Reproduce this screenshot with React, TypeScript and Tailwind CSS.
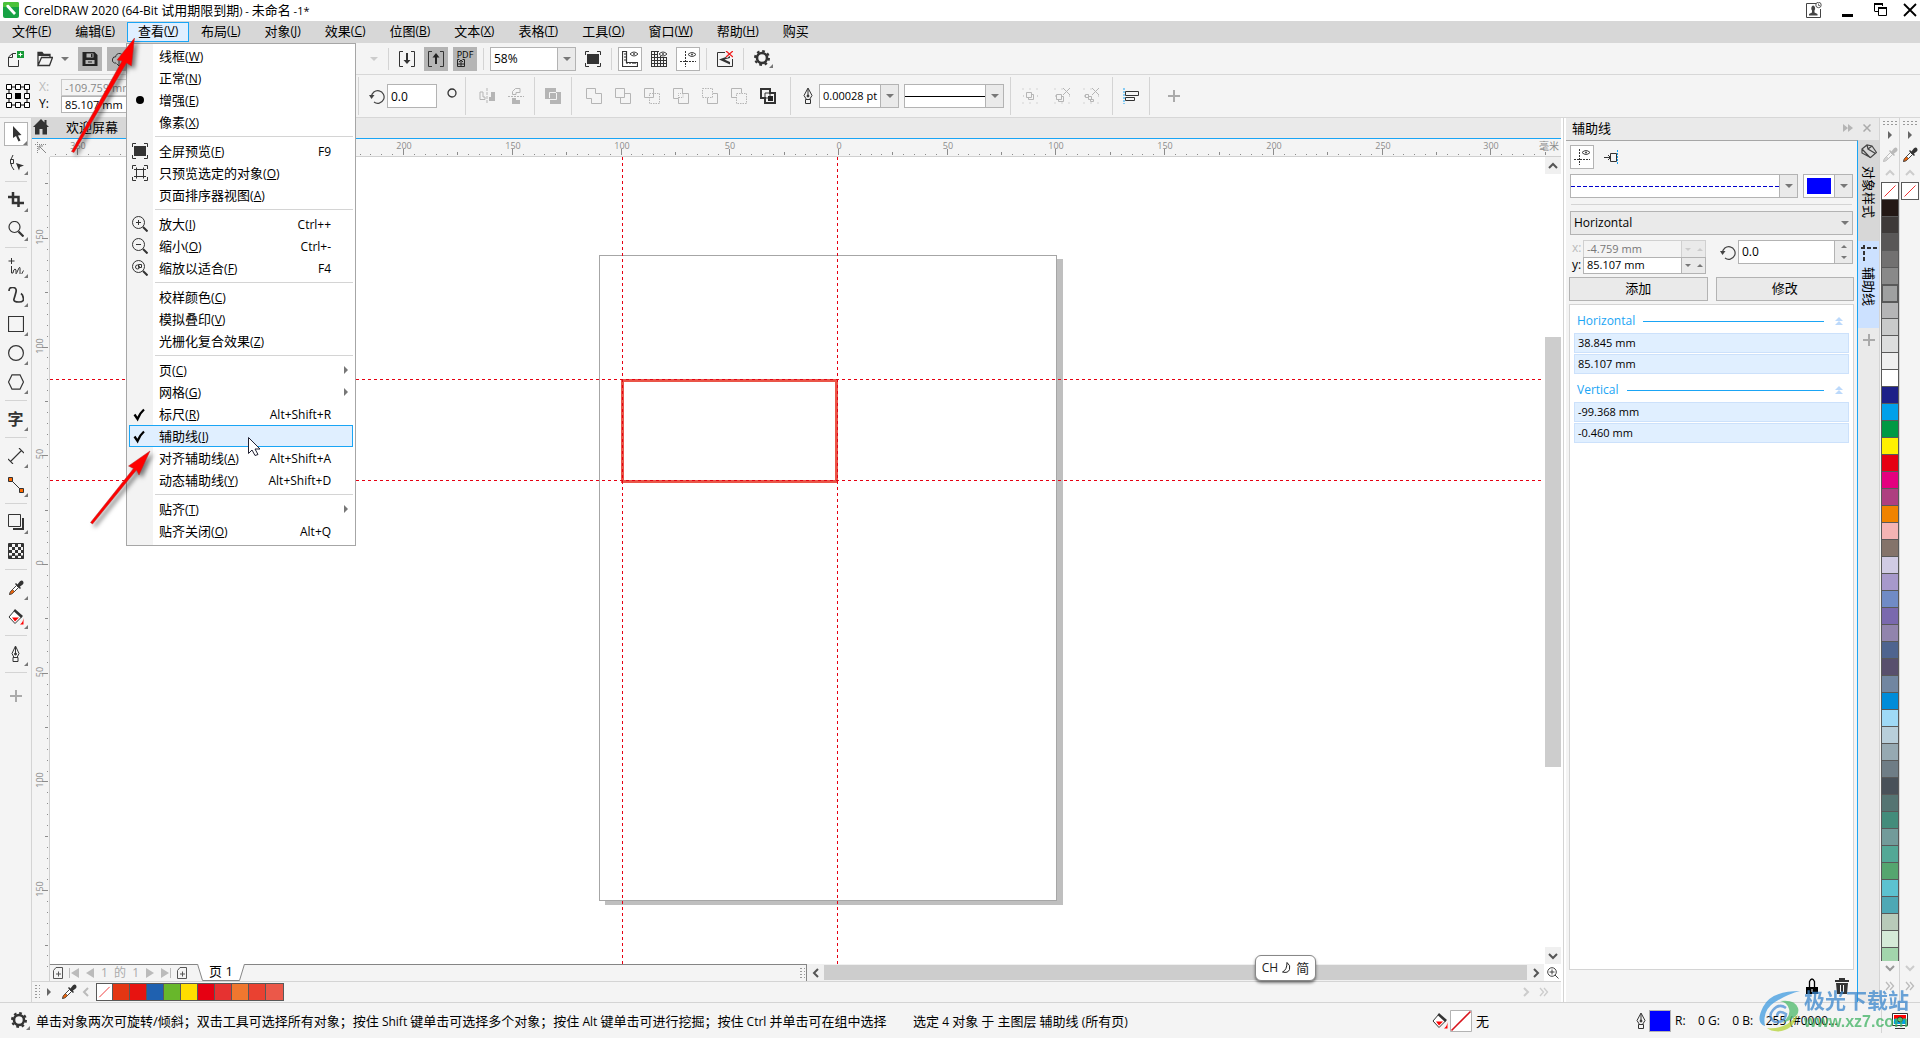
import React from "react";

type Kids = { children?: React.ReactNode; className?: string };

const guideIcon = (
  <>
    <path d="M5.5 0v16M0 10.5h16" stroke="#333" strokeDasharray="2 1" />
    <path d="M8 3.5q4-4 8 0q-4 4-8 0z" stroke="#444" />
    <circle cx="12" cy="3.5" r="1" fill="#444" />
  </>
);

// 16px icon canvas shared by the toolbars
function Icon({ children, className = "" }: Kids) {
  return (
    <svg viewBox="0 0 16 16" fill="none" className={`h-4 w-4 shrink-0 ${className}`} aria-hidden="true">
      {children}
    </svg>
  );
}

function Caret({ className = "text-[#777]" }: { className?: string }) {
  return (
    <svg viewBox="0 0 8 4" className={`h-1 w-2 shrink-0 ${className}`} aria-hidden="true">
      <path d="M0 0h8L4 4z" fill="currentColor" />
    </svg>
  );
}

function ArrowBox({ label }: { label: string }) {
  return (
    <button aria-label={label} className="flex w-[18px] shrink-0 items-center justify-center border-l border-[#b3b3b3] bg-[#eaeaea]">
      <Caret />
    </button>
  );
}

function Sep({ className = "h-[22px]" }: { className?: string }) {
  return <span className={`w-px shrink-0 bg-[#d4d4d4] ${className}`} />;
}

function Tool({ label, on, pressed, children }: Kids & { label: string; on?: boolean; pressed?: boolean }) {
  const look = pressed ? "bg-[#b5b5b5]" : on ? "border border-[#b3b3b3] bg-white" : "";
  return (
    <button aria-label={label} className={`flex h-6 w-6 shrink-0 items-center justify-center ${look}`}>
      <Icon>{children}</Icon>
    </button>
  );
}

function Gear() {
  return (
    <svg viewBox="0 0 20 20" className="h-5 w-5 shrink-0" aria-hidden="true">
      <circle cx="8" cy="9" r="5" fill="none" stroke="#333" strokeWidth="2.6" />
      <circle cx="8" cy="9" r="7" fill="none" stroke="#333" strokeWidth="2" strokeDasharray="2.7 2.8" />
      <path d="M19 15v4h-4z" fill="#777" />
    </svg>
  );
}

function Pen() {
  return (
    <svg viewBox="0 0 10 16" fill="none" stroke="#333" className="h-4 w-2.5 shrink-0" aria-hidden="true">
      <path d="M5 0L1 7.5L3.5 11.5h3L9 7.5zM5 1v7M2.5 11.5v4h5v-4z" />
      <circle cx="5" cy="8" r="1" fill="#333" />
    </svg>
  );
}

function Dropper({ muted }: { muted?: boolean }) {
  return (
    <Icon className={muted ? "opacity-30" : ""}>
      <path d="M1.500 14.500l1-3l6-6l2 2l-6 6z" stroke="#444" fill="#fff" />
      <path d="M1.500 14.500l1-3l2-2l2 2l-2 2z" fill={muted ? "#888" : "#e8640c"} stroke="#444" strokeWidth=".6" />
      <path d="M7.500 3.500l5 5" stroke="#333" strokeWidth="1.500" />
      <path d="M9 5l3-3.800q2-1.400 3 0t0 3L11.200 7.200z" fill="#333" />
    </Icon>
  );
}

function Bucket() {
  return (
    <Icon>
      <path d="M7 1L1 8l6 6.500L13.500 8z" stroke="#333" fill="#fff" />
      <path d="M5.500 2L7 0l8 7l-2 2z" fill="#333" />
      <path d="M4 8.500h7l-4 4z" fill="#f00" />
      <path d="M15.500 9v6.500h-3.500q3-2 3.500-6.500z" fill="#f00" />
    </Icon>
  );
}

function Chevron({ d, className = "" }: { d: string; className?: string }) {
  return (
    <svg viewBox="0 0 10 10" fill="none" stroke="currentColor" strokeWidth="2" className={`h-2.5 w-2.5 shrink-0 ${className}`} aria-hidden="true">
      <path d={d} />
    </svg>
  );
}

const UP = "M1 7l4-4l4 4";
const DOWN = "M1 3l4 4l4-4";
const LEFT = "M7 1L3 5l4 4";
const RIGHT = "M3 1l4 4l-4 4";
const MORE = "M1 1l3.500 4L1 9M5 1l3.500 4L5 9";

function More() {
  return (
    <svg viewBox="0 0 10 10" fill="none" stroke="currentColor" strokeWidth="1.300" className="h-2.5 w-2.5 shrink-0" aria-hidden="true">
      <path d={MORE} />
    </svg>
  );
}

function Dots({ className }: { className: string }) {
  return <span className={`shrink-0 bg-[radial-gradient(#999_0.8px,transparent_0.9px)] bg-[size:4px_3px] ${className}`} />;
}

function Key({ k }: { k: string }) {
  return (
    <span className="text-xs">
      (<u className="underline-offset-1">{k}</u>)
    </span>
  );
}

/* ---------- title + menu bar ---------- */

function TitleBar() {
  return (
    <header className="flex h-[21px] shrink-0 items-center bg-white pr-[3px] pb-px pl-[3px] text-black">
      <svg viewBox="0 0 16 16" className="h-4 w-4" aria-hidden="true">
        <rect width="16" height="16" rx="2" fill="#17a244" />
        <path d="M0 5V2q0-2 2-2h12q2 0 2 2v3z" fill="#4cc23a" />
        <path d="M3.500 3l2-.3l7.500 8.300l-2 2l-7.500-8z" fill="#fff" />
      </svg>
      <h1 className="ml-[5px] text-[13px] leading-5">
        <span className="text-xs">CorelDRAW 2020 (64-Bit </span>试用期限到期<span className="text-[11px]">) - </span>未命名<span className="text-[11px]"> -1*</span>
      </h1>
      <div className="ml-auto flex items-center">
        <button aria-label="登录" className="mr-5">
          <Icon>
            <path d="M10 1.500H.5v14h14V7" stroke="#444" />
            <path d="M7 3.500a2.500 3 0 0 1 1.500 5v2l3 1.500v1.500H3V12l3-1.500v-2A2.500 3 0 0 1 7 3.500z" fill="#444" />
            <circle cx="12.500" cy="3" r="2.700" fill="#fff" stroke="#555" />
            <path d="M12.500 1.500v2h1.500" stroke="#555" strokeWidth=".8" />
          </Icon>
        </button>
        <button aria-label="最小化" className="mr-5 flex h-4 w-[11px] items-end pb-px"><span className="h-[3px] w-full bg-black" /></button>
        <button aria-label="还原" className="mr-3.5">
          <Icon>
            <path d="M1.500 9V1.500h8V4M5.500 5.500h8v8h-8zM1.500 9.500H5" stroke="#000" />
            <path d="M1 2h9M5 6h9" stroke="#000" strokeWidth="2" />
          </Icon>
        </button>
        <button aria-label="关闭">
          <svg viewBox="0 0 14 14" className="h-3.5 w-3.5"><path d="M1 1l12 12M13 1L1 13" stroke="#000" strokeWidth="1.800" /></svg>
        </button>
      </div>
    </header>
  );
}

const tick = <path d="M2.500 8.500l3 4.500q2-5.500 6.500-9.500" stroke="#000" strokeWidth="2.300" />;
const lens = (inner: React.ReactNode) => (
  <>
    <circle cx="6.500" cy="6.500" r="6" stroke="#333" />
    <path d="M11 11l4.500 4.500" stroke="#333" strokeWidth="2" />
    {inner}
  </>
);
const frame = <path d="M.5 4V.5h3.500M12 .5h3.500V4M15.500 12v3.500H12M4 15.500H.5V12" stroke="#333" />;

type Item = { label: string; k: string; hot?: string; icon?: React.ReactNode; sub?: boolean; active?: boolean } | null;

const viewMenu: Item[] = [
  { label: "线框", k: "W" },
  { label: "正常", k: "N" },
  { label: "增强", k: "E", icon: <circle cx="8" cy="8" r="4" fill="#000" /> },
  { label: "像素", k: "X" },
  null,
  { label: "全屏预览", k: "F", hot: "F9", icon: <>{frame}<path d="M2 3h12v10H2z" fill="#333" /></> },
  { label: "只预览选定的对象", k: "O", icon: <>{frame}<path d="M4.500 2.500v11M11.500 2.500v11M2 4.500h12M2 11.500h12" stroke="#333" /></> },
  { label: "页面排序器视图", k: "A" },
  null,
  { label: "放大", k: "I", hot: "Ctrl++", icon: lens(<path d="M4 6.500h5M6.500 4v5" stroke="#333" />) },
  { label: "缩小", k: "O", hot: "Ctrl+-", icon: lens(<path d="M4 6.500h5" stroke="#333" />) },
  { label: "缩放以适合", k: "F", hot: "F4", icon: lens(<><circle cx="5.500" cy="7" r="2" stroke="#333" /><path d="M6.500 4.500h3v3h-3z" stroke="#333" /></>) },
  null,
  { label: "校样颜色", k: "C" },
  { label: "模拟叠印", k: "V" },
  { label: "光栅化复合效果", k: "Z" },
  null,
  { label: "页", k: "C", sub: true },
  { label: "网格", k: "G", sub: true },
  { label: "标尺", k: "R", hot: "Alt+Shift+R", icon: tick },
  { label: "辅助线", k: "I", icon: tick, active: true },
  { label: "对齐辅助线", k: "A", hot: "Alt+Shift+A" },
  { label: "动态辅助线", k: "Y", hot: "Alt+Shift+D" },
  null,
  { label: "贴齐", k: "T", sub: true },
  { label: "贴齐关闭", k: "O", hot: "Alt+Q" },
];

function ViewMenu() {
  return (
    <ul role="menu" className="absolute -left-px top-[21px] z-20 w-[230px] border border-[#a6a6a6] bg-[linear-gradient(to_right,#f3f3f3_26px,#fff_26px)] px-0.5 pt-px pb-[3px] text-left text-black">
      {viewMenu.map((m, i) =>
        m ? (
          <li key={i}>
            <button
              role="menuitem"
              className={`flex h-[22px] w-full items-center border pl-0.5 text-[13px] leading-5 ${m.active ? "border-[#1aa5f5] bg-[#e0efff]" : "border-transparent"}`}
            >
              <Icon>{m.icon}</Icon>
              <span className="ml-[11px] whitespace-nowrap">{m.label}<Key k={m.k} /></span>
              <span className="mr-[21px] ml-auto pt-0.5 text-xs">{m.hot}</span>
              {m.sub && <svg viewBox="0 0 4 8" className="mr-1 -ml-4 h-2 w-1"><path d="M0 0l4 4l-4 4z" fill="#777" /></svg>}
            </button>
          </li>
        ) : (
          <li key={i} role="separator" className="flex h-[7px] items-center pl-[26px]"><span className="h-px w-full bg-[#d4d4d4]" /></li>
        )
      )}
    </ul>
  );
}

const menus = [["文件", "F"], ["编辑", "E"], ["查看", "V"], ["布局", "L"], ["对象", "J"], ["效果", "C"], ["位图", "B"], ["文本", "X"], ["表格", "T"], ["工具", "O"], ["窗口", "W"], ["帮助", "H"], ["购买", ""]];

function MenuBar() {
  return (
    <nav className="flex h-[22px] shrink-0 items-center bg-[#d7d7d7] text-[13px] leading-[18px] text-black">
      {menus.map(([name, k]) => (
        <div key={name} className="relative">
          <button className={`flex h-5 items-start border px-[11px] leading-[17px] whitespace-nowrap ${k === "V" ? "w-[62px] justify-center border-[#1aa5f5] bg-[#e0efff]" : "border-transparent"}`}>
            {name}{k && <Key k={k} />}
          </button>
          {k === "V" && <ViewMenu />}
        </div>
      ))}
    </nav>
  );
}

/* ---------- toolbars ---------- */

function StandardBar() {
  return (
    <div className="flex h-8 shrink-0 items-center border-b border-[#d7d7d7] bg-[#f4f4f4]">
      <div className="flex w-[370px] shrink-0 items-center pl-1">
        <Tool label="新建">
          <path d="M8 2.500H4.500L.5 6v9.500h10V9" stroke="#333" />
          <path d="M4.500 3v3.500H1" stroke="#333" />
          <path d="M9 0h7v7H9z" fill="#159a36" />
          <path d="M12.500 1.500v4M10.500 3.500h4" stroke="#fff" />
        </Tool>
        <span className="w-[5px]" />
        <Tool label="打开">
          <path d="M1 14.500V1.500h4l1.500 2h6.500V6.500H4.500L1 14.500h11.500l3-8H13" stroke="#333" strokeWidth="1.300" />
          <path d="M1 3V1.500h4l1.500 2h6.500v1.500H1z" fill="#333" />
        </Tool>
        <span className="ml-1"><Caret /></span>
        <span className="w-[9px]" />
        <Tool label="保存" pressed>
          <path d="M.5 1h12l3 3v11H.5z" fill="#222" />
          <path d="M4.500 2.500h7v4h-7zM3.500 9h9v4h-9z" fill="#b5b5b5" />
          <path d="M9 3h1.500v3H9zM6 10.500h4v1H6z" fill="#222" />
        </Tool>
        <span className="w-[5px]" />
        <Tool label="云" pressed>
          <path d="M5 12H3.500q-3-1-2-4t3-2q1-4 4.500-3.500t4 4q3 .5 2.500 3T12 12M8 7v8M5.500 12.500L8 15l2.500-2.500" stroke="#333" />
        </Tool>
      </div>
      <Caret className="text-[#ccc]" />
      <Sep className="ml-2.5 h-[22px]" />
      <span className="w-1.5" />
      <Tool label="导入"><path d="M4 .5H.5v15H4M12 .5h3.500v15H12" stroke="#333" /><path d="M8 2v9" stroke="#333" strokeWidth="2" /><path d="M4.500 9h7L8 13z" fill="#333" /></Tool>
      <span className="w-[5px]" />
      <Tool label="导出" pressed><path d="M4 .5H.5v15H4M12 .5h3.500v15H12" stroke="#333" /><path d="M8 13V5" stroke="#222" strokeWidth="2" /><path d="M4.500 6.500h7L8 2z" fill="#222" /></Tool>
      <span className="w-[5px]" />
      <button aria-label="发布为 PDF" className="flex h-6 w-6 flex-col items-center justify-center bg-[#b5b5b5] text-[9px] leading-[9px] text-black">
        PDF
        <svg viewBox="0 0 8 8" className="mr-2 h-2 w-2"><path d="M2.500.5h-2v7h7v-7h-2M4 7V1M2 3l2-2l2 2M1 5h6" fill="none" stroke="#222" /></svg>
      </button>
      <Sep className="ml-1.5 h-[22px]" />
      <div className="ml-1.5 flex h-6 w-[86px] border border-[#b3b3b3] bg-white">
        <input aria-label="缩放级别" defaultValue="58%" className="min-w-0 flex-1 bg-white pl-[3px] text-xs outline-none" />
        <ArrowBox label="缩放列表" />
      </div>
      <span className="w-[5px]" />
      <Tool label="全屏预览">{frame}<path d="M2 3h12v10H2z" fill="#333" /></Tool>
      <Sep className="ml-1.5 h-[22px]" />
      <span className="w-1.5" />
      <Tool label="显示标尺" on>
        <path d="M.5.5h4v11h11v4H.5zM2 3h2M2 6h2M2 9h2M5 13v-1M8 13v-1M11 13v-1M13 13v-1" stroke="#333" strokeWidth="1.200" />
        <path d="M8 3q4-4 8 0q-4 4-8 0z" stroke="#444" />
        <circle cx="12" cy="3" r="1" fill="#444" />
      </Tool>
      <span className="w-[5px]" />
      <Tool label="显示网格">
        <path d="M.5 0v16M3.500 0v16M6.500 0v16M9.500 5v11M12.500 6v10M15.500 6v10M0 .5h8M0 3.500h7M0 6.500h16M0 9.500h16M0 12.500h16M0 15.500h16" stroke="#333" />
        <path d="M8 3q4-4 8 0q-4 4-8 0z" stroke="#444" />
        <circle cx="12" cy="3" r="1" fill="#444" />
      </Tool>
      <span className="w-[5px]" />
      <Tool label="显示辅助线" on>{guideIcon}</Tool>
      <Sep className="ml-1.5 h-[22px]" />
      <span className="w-1.5" />
      <Tool label="贴齐关闭">
        <path d="M8 1.500H.5v14h15V8" stroke="#333" />
        <path d="M2 8.500L13 4.500v2.500L7.500 8.500L13 11v2.500z" fill="#333" />
        <path d="M9 0l7 6M16 0L9 6" stroke="#f4f4f4" strokeWidth="3" />
        <path d="M9 0l7 6M16 0L9 6" stroke="#f01818" strokeWidth="1.300" />
      </Tool>
      <Sep className="ml-1.5 h-[22px]" />
      <button aria-label="选项" className="ml-2.5"><Gear /></button>
    </div>
  );
}

function Rotate() {
  return (
    <Icon>
      <path d="M2.500 9A6.300 6.300 0 1 1 5 14" stroke="#444" strokeWidth="1.200" />
      <path d="M0 7h5.500L2.500 11z" fill="#444" />
    </Icon>
  );
}

const shaping: [string, React.ReactNode][] = [
  ["焊接", <path d="M.5.5h9v5h6v10h-10v-5h-5z" stroke="#b5b5b5" />],
  ["修剪", <path d="M.5.5h9v9h-9zM5.500 9.500v6h10v-10h-6" stroke="#b5b5b5" />],
  ["相交", <><path d="M.5.5h9v9h-9z" stroke="#b5b5b5" /><path d="M5.500 5.500h10v10h-10z" stroke="#b5b5b5" strokeDasharray="1.500 1" /></>],
  ["简化", <><path d="M.5.5h9v5h6v10h-10v-5h-5z" stroke="#b5b5b5" /><path d="M5.500 10V5.500H10M6 9.500h4V6" stroke="#b5b5b5" strokeDasharray="1 1" /></>],
  ["移除后面对象", <><path d="M.5.5h10v9h-10z" stroke="#b5b5b5" strokeDasharray="1.500 1" /><path d="M11 5.500h4.500v10h-10V10" stroke="#b5b5b5" /></>],
  ["移除前面对象", <><path d="M5 9.500H.5v-9h10V5" stroke="#b5b5b5" /><path d="M5.500 5.500h10v10h-10z" stroke="#b5b5b5" strokeDasharray="1.500 1" /></>],
];

function PropertyBar() {
  const dotted = <path d="M.5 1h16M.5 15h16M1 8h1M15 8h1" stroke="#b5b5b5" strokeDasharray="1 6" />;
  return (
    <div className="flex h-[43px] shrink-0 items-center border-b border-[#d7d7d7] bg-[#f4f4f4]">
      <div className="flex w-[358px] shrink-0 items-center pl-1.5">
        <svg viewBox="0 0 24 24" fill="none" stroke="#000" className="h-6 w-6 shrink-0" aria-hidden="true">
          <path d="M3 3h18v18H3z" />
          <path d="M.5.5h5v5h-5zM9.500.5h5v5h-5zM18.500.5h5v5h-5zM.5 9.500h5v5h-5zM18.500 9.500h5v5h-5zM.5 18.500h5v5h-5zM9.500 18.500h5v5h-5zM18.500 18.500h5v5h-5z" fill="#fff" />
          <path d="M9 9h6v6H9z" fill="#000" stroke="none" />
        </svg>
        <div className="ml-[9px] grid grid-cols-[22px_110px] text-xs">
          <label htmlFor="px" className="leading-4 text-[#bbb]">X:</label>
          <input id="px" disabled defaultValue="-109.759 mm" className="h-[17px] border border-[#c9c9c9] bg-[#f4f4f4] pl-[3px] text-[11px] text-[#888]" />
          <label htmlFor="py" className="leading-4">Y:</label>
          <input id="py" defaultValue="85.107 mm" className="h-[17px] border border-[#b3b3b3] bg-white pl-[3px] text-[11px]" />
        </div>
      </div>
      <Sep className="h-[38px]" />
      <div className="ml-2.5 flex items-center"><Rotate /></div>
      <input aria-label="旋转角度" defaultValue="0.0" className="ml-0.5 h-6 w-[50px] border border-[#b3b3b3] bg-white pl-[3px] text-xs" />
      <svg viewBox="0 0 10 10" className="mb-1.5 ml-2.5 h-2.5 w-2.5"><circle cx="5" cy="5" r="4" fill="none" stroke="#333" strokeWidth="1.300" /></svg>
      <Sep className="ml-2 h-[38px]" />
      <span className="w-[9px]" />
      <Tool label="水平镜像"><path d="M1 4v7.500h5V9H4V4z" stroke="#b5b5b5" /><path d="M8 0v16" stroke="#b5b5b5" strokeDasharray="3 1" /><path d="M10 13V9h2V4h4v9z" fill="#b5b5b5" /></Tool>
      <span className="w-[5px]" />
      <Tool label="垂直镜像"><path d="M4.500 6.500v-3l3-3H12v4H8v2z" stroke="#b5b5b5" /><path d="M0 8.500h16" stroke="#b5b5b5" strokeDasharray="2 1" /><path d="M4 10h4v2h4v4H4z" fill="#b5b5b5" /></Tool>
      <Sep className="ml-1.5 h-[38px]" />
      <span className="w-1.5" />
      <Tool label="合并"><path d="M0 0h11v4h5v12H5v-5H0z" fill="#b5b5b5" /><path d="M4.500 10V4.500H11M11.500 5v6.500H5" stroke="#f4f4f4" /></Tool>
      <Sep className="ml-1.5 h-[38px]" />
      <div className="mx-2.5 flex items-center gap-[5px]">
        {shaping.map(([name, art]) => <Tool key={name} label={name}>{art}</Tool>)}
        <Tool label="边界"><path d="M1 1h9v4h5v10H5v-5H1z" stroke="#333" strokeWidth="2" /><path d="M5 5h5v5H5z" stroke="#333" /><path d="M8 8h5v5H8z" fill="#222" /></Tool>
      </div>
      <Sep className="h-[38px]" />
      <span className="ml-3 flex"><Pen /></span>
      <div className="ml-1.5 flex h-6 w-20 border border-[#b3b3b3] bg-white">
        <input aria-label="轮廓宽度" defaultValue="0.00028 pt" className="min-w-0 flex-1 bg-white pl-[3px] text-[11px] outline-none" />
        <ArrowBox label="宽度列表" />
      </div>
      <div className="ml-[5px] flex h-6 w-[100px] border border-[#b3b3b3] bg-white">
        <span className="flex flex-1 items-center"><span className="h-px w-full bg-black" /></span>
        <ArrowBox label="线条样式" />
      </div>
      <Sep className="ml-1.5 h-[38px]" />
      <span className="w-[7px]" />
      <Tool label="组合">{dotted}<path d="M4.500 4.500h5v5h-5zM6.500 9.500v2h5v-5h-2" stroke="#b5b5b5" /></Tool>
      <span className="w-2" />
      <Tool label="取消组合"><path d="M.5 1h8M.5 15h16M1 8h1M15 8h1" stroke="#b5b5b5" strokeDasharray="1 6" /><path d="M2.500 6.500h5v5h-5zM4.500 11.500v2h5v-5h-2M9 0l7 7M16 0L9 7" stroke="#b5b5b5" /></Tool>
      <span className="w-[5px]" />
      <Tool label="取消全部组合"><path d="M.5 1h8M.5 15h16M1 8h1M15 8h1" stroke="#b5b5b5" strokeDasharray="1 6" /><path d="M2.500 6.500h3v3h-3zM5.500 8.500h3v3h-3zM7.500 11.500h3v2h-3zM9 0l7 7M16 0L9 7" stroke="#b5b5b5" /></Tool>
      <Sep className="ml-[9px] h-[38px]" />
      <span className="w-1.5" />
      <Tool label="对齐与分布"><path d="M1 0v16" stroke="#1aa5f5" strokeDasharray="2 1" /><path d="M2.500 3.500h13v4h-13zM2.500 9.500h9v3h-9z" stroke="#333" /></Tool>
      <Sep className="ml-1.5 h-[38px]" />
      <button aria-label="自定义" className="ml-4"><Icon><path d="M2 8h12M8 2v12" stroke="#aaa" strokeWidth="2" /></Icon></button>
    </div>
  );
}

/* ---------- toolbox ---------- */

const tools: ([string, React.ReactNode] | null)[] = [
  ["选择", <path d="M5 0v12l3-2l2.500 5.500l2-1L10 9.500l3.500-.5z" fill="#333" />],
  ["形状", <><path d="M5 0Q0 8 6 15" stroke="#333" /><path d="M2.500 4.500h3v4h-3z" stroke="#333" fill="#f4f4f4" /><path d="M8 8l8 2.500l-4 1.500l-1 3.500z" fill="#333" /></>],
  null,
  ["裁剪", <path d="M0 5h10.500v6M5 0v11h11M10.500 15v-4" stroke="#333" strokeWidth="2.500" />],
  ["缩放", <><circle cx="6.500" cy="6" r="5.500" stroke="#333" strokeWidth="1.200" /><path d="M10.500 10.500l5 5" stroke="#333" strokeWidth="2.200" /></>],
  null,
  ["手绘", <><path d="M3.500 0v6M.5 3h6" stroke="#333" /><path d="M3.500 8v7H5q.5-4 2-4t1 3.500t2-2.500t2 1.500t3.500-1" stroke="#333" /></>],
  ["艺术笔", <path d="M1 4q0-4 4-3.500t3 4.500t-2 7t5 3t4-5q0-2-2-3.500" stroke="#333" strokeWidth="1.700" />],
  ["矩形", <path d="M.5.5h15v15H.5z" stroke="#333" strokeWidth="1.200" />],
  ["椭圆", <circle cx="8" cy="8" r="7.400" stroke="#333" strokeWidth="1.200" />],
  ["多边形", <path d="M4 .8h8L15.500 8L12 15.200H4L.5 8z" stroke="#333" strokeWidth="1.200" />],
  null,
  ["文本", null],
  null,
  ["尺度", <path d="M2.500 13.500l11-11M0 11l5 5M11 0l5 5" stroke="#333" strokeWidth="1.100" />],
  ["连接器", <><path d="M3 3l10 10" stroke="#333" /><path d="M.5.5h4v4h-4zM11.500 11.500h4v4h-4z" stroke="#333" fill="#ff6a00" /></>],
  null,
  ["阴影", <><path d="M.5.5h12v12H.5z" stroke="#333" /><path d="M5 15h10V4" stroke="#333" strokeWidth="2" /></>],
  ["透明度", <><path d="M.5.5h15v15H.5z" stroke="#333" /><path d="M1 2.500h15M1 8.500h15M1 14h15" stroke="#333" strokeWidth="3" strokeDasharray="3 3" /><path d="M4 5.500h12M4 11.500h12" stroke="#333" strokeWidth="3" strokeDasharray="3 3" /></>],
  null,
  ["颜色滴管", <Dropper />],
  ["交互式填充", <Bucket />],
  null,
  ["轮廓笔", <g stroke="#333"><path d="M7.500 0L4 7.500L6 11.500h3L11 7.500zM7.500 1v7M5 11.500v4h5v-4z" /><circle cx="7.500" cy="8" r="1" fill="#333" /></g>],
  null,
];

function Toolbox() {
  return (
    <aside className="flex w-8 shrink-0 flex-col items-center border-r border-[#d4d4d4] bg-[#f4f4f4] pt-px">
      {tools.map((t, i) =>
        t ? (
          <button key={i} aria-label={t[0]} className="flex h-[29px] w-full items-center justify-center">
            <span className={`relative flex h-6 w-6 items-center justify-center ${i === 0 ? "border border-[#b3b3b3] bg-white" : ""}`}>
              {t[1] ? <Icon>{t[1]}</Icon> : <span className="text-base leading-4 font-bold text-[#333]">字</span>}
              {t[0] !== "透明度" && (
                <svg viewBox="0 0 4 4" className="absolute right-0 bottom-0 h-1 w-1"><path d="M4 0v4H0z" fill="#777" /></svg>
              )}
            </span>
          </button>
        ) : (
          <span key={i} className="flex h-2 w-[22px] items-center"><span className="h-px w-full bg-[#d4d4d4]" /></span>
        )
      )}
      <button aria-label="添加工具" className="mt-3"><Icon><path d="M2 8h12M8 2v12" stroke="#aaa" strokeWidth="2" /></Icon></button>
    </aside>
  );
}

/* ---------- document window ---------- */

const STEP = 10.874;
const hSteps = Array.from({ length: 138 }, (_, i) => i - 72);
const vSteps = Array.from({ length: 74 }, (_, i) => i - 36);

function HRuler() {
  return (
    <svg className="h-[18px] min-w-0 flex-1 border-b border-[#d0d0d0] text-[9px]" fill="#8c8c8c" aria-hidden="true">
      {hSteps.map((n) => {
        const x = Math.round(788 + n * STEP);
        const h = n % 10 === 0 ? 6 : n % 5 === 0 ? 3 : 1;
        return (
          <g key={n}>
            <rect x={x} y={16 - h} width="1" height={h} />
            {n % 10 === 0 && <text x={x + 1} y="10" textAnchor="middle">{Math.abs(n * 5)}</text>}
          </g>
        );
      })}
      <text x="1489" y="11" className="text-[10px]">毫米</text>
    </svg>
  );
}

function VRuler() {
  return (
    <svg className="w-[18px] shrink-0 border-r border-[#d0d0d0] text-[9px]" fill="#8c8c8c" aria-hidden="true">
      {vSteps.map((n) => {
        const y = Math.round(407 + n * STEP);
        const w = n % 10 === 0 ? 6 : n % 5 === 0 ? 3 : 1;
        return (
          <g key={n}>
            <rect x={16 - w} y={y} width={w} height="1" />
            {n % 10 === 0 && <text transform={`translate(11 ${y - 1}) rotate(-90)`} textAnchor="middle">{Math.abs(n * 5)}</text>}
          </g>
        );
      })}
    </svg>
  );
}

function Drawing() {
  return (
    <svg className="min-w-0 flex-1 bg-white" fill="none" shapeRendering="crispEdges" aria-label="绘图页面">
      <path d="M1007 102h6v646H555v-5h452z" fill="#bfbfbf" />
      <rect x="549.500" y="98.500" width="457" height="645" fill="#fff" stroke="#a6a6a6" />
      <rect x="572.500" y="223.500" width="214" height="101" stroke="#ea5548" strokeWidth="3" />
      <g stroke="#e60012" strokeDasharray="3 3">
        <path d="M0 222.500h1491M0 323.500h1491" />
        <path d="M572.500 0v807M787.500 0v807" />
      </g>
    </svg>
  );
}

function PageBar() {
  const add = (
    <svg viewBox="0 0 10 12" fill="none" stroke="#555" className="h-3 w-2.5"><path d="M3 .5h6.500v11H.5v-8zM3 7h5M5.500 4.500v5" /></svg>
  );
  return (
    <div className="flex h-[17px] shrink-0 bg-[#f4f4f4]">
      <div className="flex min-w-0 flex-[0_1_757px] items-center border-t border-r border-[#858585] text-xs text-[#aaa]">
        <button aria-label="在前添加页" className="ml-[3px]">{add}</button>
        <button aria-label="第一页" className="ml-1.5"><svg viewBox="0 0 10 10" className="h-2.5 w-2.5"><path d="M0 0h1v10H0zM10 0v10L2 5z" fill="#bbb" /></svg></button>
        <button aria-label="上一页" className="ml-[7px]"><svg viewBox="0 0 8 10" className="h-2.5 w-2"><path d="M8 0v10L0 5z" fill="#bbb" /></svg></button>
        <span className="ml-[7px] w-10 whitespace-pre">1  的  1</span>
        <button aria-label="下一页" className="ml-[5px]"><svg viewBox="0 0 8 10" className="h-2.5 w-2"><path d="M0 0v10L8 5z" fill="#bbb" /></svg></button>
        <button aria-label="最后一页" className="ml-[7px]"><svg viewBox="0 0 10 10" className="h-2.5 w-2.5"><path d="M9 0h1v10H9zM0 0v10l8-5z" fill="#bbb" /></svg></button>
        <button aria-label="在后添加页" className="ml-1.5">{add}</button>
        <button className="relative ml-2.5 flex h-4 w-12 justify-center self-start text-black">
          <svg viewBox="0 0 48 17" className="absolute -top-px left-0 h-[17px] w-12"><path d="M0 0l6 16.500h36L48 0z" fill="#fff" /><path d="M.5 0l5 16.500h37l5-16.500" fill="none" stroke="#858585" /></svg>
          <span className="relative text-[13px] leading-[13px]">页 1</span>
        </button>
        <Dots className="mr-px ml-auto h-3 w-1.5" />
      </div>
      <div className="flex min-w-0 flex-1 bg-[#f0f0f0]">
        <button aria-label="向左滚动" className="flex w-[17px] items-center justify-center text-[#555]"><Chevron d={LEFT} /></button>
        <span className="mt-px mb-px flex-1 bg-[#cdcdcd]" />
        <button aria-label="向右滚动" className="flex w-[17px] items-center justify-center text-[#555]"><Chevron d={RIGHT} /></button>
        <button aria-label="导航器" className="flex w-[17px] items-center justify-center bg-white">
          <svg viewBox="0 0 12 12" fill="none" stroke="#444" className="h-3 w-3"><circle cx="5" cy="5" r="4.300" /><path d="M8 8l3.500 3.500M5 2.500v5M2.500 5h5" /></svg>
        </button>
      </div>
    </div>
  );
}

function NoFill({ className = "" }: { className?: string }) {
  return (
    <svg viewBox="0 0 16 16" className={`shrink-0 bg-white ${className}`}><path d="M2.500 13.500l11-11" stroke="#e33" /></svg>
  );
}

const docColors = ["bg-[#e43613]", "bg-[#e71310]", "bg-[#1f61b0]", "bg-[#68b72b]", "bg-[#ffde00]", "bg-[#e60012]", "bg-[#e63231]", "bg-[#f0772f]", "bg-[#ea4131]", "bg-[#eb5849]"];

function DocPalette() {
  return (
    <div className="flex h-[21px] shrink-0 items-center border-t border-[#d4d4d4] bg-[#f4f4f4] pl-0.5">
      <Dots className="h-4 w-1.5" />
      <svg viewBox="0 0 4 8" className="ml-[7px] h-2 w-1"><path d="M0 0l4 4l-4 4z" fill="#666" /></svg>
      <button aria-label="滴管" className="ml-2.5"><Dropper /></button>
      <Chevron d={LEFT} className="ml-1 text-[#bbb]" />
      <div className="ml-[5px] flex h-[18px] divide-x divide-[#595959] border border-[#595959]">
        <NoFill className="h-4 w-4" />
        {docColors.map((c) => <button key={c} aria-label="颜色" className={`w-[17px] ${c}`} />)}
      </div>
      <span className="ml-auto mr-3 flex gap-2 text-[#ccc]">
        <Chevron d={RIGHT} />
        <More />
      </span>
    </div>
  );
}

function DocWindow() {
  return (
    <main className="flex min-w-0 flex-1 flex-col bg-[#f4f4f4]">
      <div className="flex h-[21px] shrink-0 border-b border-[#1aa5f5] bg-[#eaeaea]">
        <button className="flex w-[130px] items-center bg-[#d7d7d7] pb-0.5 pl-px text-[13px] leading-[18px]">
          <Icon><path d="M8 0L0 8h2v7.500h4.500V10h3v5.500H14V8h2l-2.500-2.500V1h-2v2.500z" fill="#333" /></Icon>
          <span className="ml-[17px]">欢迎屏幕</span>
        </button>
      </div>
      <div className="flex shrink-0">
        <span className="flex h-[18px] w-[18px] shrink-0 items-center justify-center">
          <svg viewBox="0 0 12 12" fill="none" stroke="#888" className="h-3 w-3"><path d="M2.500 0v12M0 2.500h12" strokeDasharray="1 1" /><path d="M4 4l7 7M4 8V4h4" /></svg>
        </span>
        <HRuler />
      </div>
      <div className="flex min-h-0 flex-1">
        <VRuler />
        <div className="flex min-w-0 flex-1 flex-col">
          <div className="flex min-h-0 flex-1">
            <Drawing />
            <div className="flex w-4 shrink-0 flex-col bg-white">
              <button aria-label="向上滚动" className="flex h-[17px] items-center justify-center bg-[#f0f0f0] text-[#555]"><Chevron d={UP} /></button>
              <span className="flex-[163]" />
              <span className="flex-[430] bg-[#cdcdcd]" />
              <span className="flex-[180]" />
              <button aria-label="向下滚动" className="flex h-[17px] items-center justify-center bg-[#f0f0f0] text-[#555]"><Chevron d={DOWN} /></button>
            </div>
          </div>
          <PageBar />
        </div>
      </div>
      <DocPalette />
    </main>
  );
}

/* ---------- guidelines docker ---------- */

function Spin({ dim }: { dim?: boolean }) {
  const c = dim ? "text-[#ccc]" : "text-[#777]";
  return (
    <span className={`flex w-6 shrink-0 items-center justify-center gap-1.5 border-l bg-[#eaeaea] ${dim ? "border-[#d0d0d0]" : "border-[#b3b3b3]"}`}>
      <svg viewBox="0 0 6 3" className={`h-[3px] w-1.5 ${c}`}><path d="M0 0h6L3 3z" fill="currentColor" /></svg>
      <svg viewBox="0 0 6 3" className={`h-[3px] w-1.5 ${c}`}><path d="M0 3h6L3 0z" fill="currentColor" /></svg>
    </span>
  );
}

function GuideGroup({ name, values }: { name: string; values: string[] }) {
  return (
    <section>
      <h3 className="flex h-7 items-center pt-1 pl-[3px] text-xs text-[#1aa5f5]">
        {name}
        <span className="mr-[27px] ml-2 h-px flex-1 bg-[#1aa5f5]" />
        <svg viewBox="0 0 8 8" className="mr-1.5 -ml-4 h-2 w-2"><path d="M0 4l4-4l4 4zM0 8l4-4l4 4z" fill="#bcd9fb" /></svg>
      </h3>
      <ul className="flex flex-col gap-px">
        {values.map((v) => <li key={v} className="h-5 border border-[#cce1fb] bg-[#e0efff] pl-[3px] text-[11px] leading-[18px]">{v}</li>)}
      </ul>
    </section>
  );
}

function Docker() {
  return (
    <section className="flex w-[313px] shrink-0 flex-col bg-[#f4f4f4]">
      <header className="flex h-[22px] shrink-0 items-center bg-[#eaeaea] pr-1 pb-0.5 pl-1.5 text-[#aaa]">
        <h2 className="text-[13px] leading-5 text-black">辅助线</h2>
        <button aria-label="折叠" className="ml-auto"><svg viewBox="0 0 10 8" className="h-2 w-2.5"><path d="M0 0l5 4l-5 4zM5 0l5 4l-5 4z" fill="#b5b5b5" /></svg></button>
        <button aria-label="关闭泊坞窗" className="ml-1.5"><Icon className="p-1"><path d="M1 1l14 14M15 1L1 15" stroke="#aaa" strokeWidth="3" /></Icon></button>
      </header>
      <div className="flex min-h-0 flex-1">
        <div className="flex min-w-0 flex-1 flex-col border-t border-r border-t-[#a6a6a6] border-r-[#1aa5f5] pr-[3px] pl-[3px]">
          <div className="flex items-center gap-2.5 pt-1 pl-px">
            <Tool label="显示辅助线" on>{guideIcon}</Tool>
            <button aria-label="贴齐辅助线"><Icon><path d="M0 8.500h6M4 6l2.500 2.500L4 11M6.500 4.500h6v8h-6z" stroke="#333" /><path d="M13.500 1v15" stroke="#1aa5f5" strokeDasharray="2 1" /></Icon></button>
          </div>
          <div className="mt-[5px] flex gap-[5px] pl-px">
            <div className="flex h-6 flex-1 border border-[#b3b3b3] bg-white">
              <span className="flex min-w-0 flex-1 items-center"><svg className="h-px w-full"><path d="M0 .5h400" stroke="#00c" strokeDasharray="4 2" /></svg></span>
              <ArrowBox label="线型" />
            </div>
            <div className="mr-px flex h-6 w-[50px] border border-[#b3b3b3] bg-white">
              <span className="flex-1 p-[3px]"><span className="block h-full bg-[#00f]" /></span>
              <ArrowBox label="辅助线颜色" />
            </div>
          </div>
          <hr className="mx-0.5 mt-1.5 border-[#d4d4d4]" />
          <div className="relative mx-px mt-1.5">
            <select aria-label="辅助线类型" className="h-6 w-full appearance-none border border-[#b3b3b3] bg-[#eaeaea] pl-[3px] text-xs">
              <option>Horizontal</option>
              <option>Vertical</option>
            </select>
            <span className="pointer-events-none absolute top-2.5 right-1"><Caret /></span>
          </div>
          <div className="mx-px mt-[5px] flex items-start">
            <div className="grid grid-cols-[13px_123px] text-xs">
              <label htmlFor="gx" className="pl-0.5 leading-4 text-[#bbb]">x:</label>
              <div className="flex h-[17px] border border-b-0 border-[#d0d0d0]">
                <input id="gx" disabled defaultValue="-4.759 mm" className="min-w-0 flex-1 pl-[3px] text-[11px] text-[#777]" />
                <Spin dim />
              </div>
              <label htmlFor="gy" className="pl-0.5 leading-4">y:</label>
              <div className="flex h-[17px] border border-[#b3b3b3] bg-white">
                <input id="gy" defaultValue="85.107 mm" className="min-w-0 flex-1 pl-[3px] text-[11px]" />
                <Spin />
              </div>
            </div>
            <span className="mt-1 ml-3.5 flex"><Rotate /></span>
            <div className="ml-0.5 flex h-6 min-w-0 flex-1 border border-[#b3b3b3] bg-white">
              <input aria-label="角度" defaultValue="0.0" className="min-w-0 flex-1 pl-[3px] text-xs" />
              <span className="flex w-[18px] shrink-0 flex-col items-center justify-center gap-2 border-l border-[#b3b3b3] bg-[#eaeaea] text-[#777]">
                <svg viewBox="0 0 6 3" className="h-[3px] w-1.5"><path d="M0 3h6L3 0z" fill="currentColor" /></svg>
                <svg viewBox="0 0 6 3" className="h-[3px] w-1.5"><path d="M0 0h6L3 3z" fill="currentColor" /></svg>
              </span>
            </div>
          </div>
          <div className="mt-[3px] grid grid-cols-2 gap-2 text-[13px] leading-5">
            <button className="h-6 border border-[#b3b3b3] bg-[#eaeaea] pb-0.5">添加</button>
            <button className="h-6 border border-[#b3b3b3] bg-[#eaeaea] pb-0.5">修改</button>
          </div>
          <div className="mt-[3px] min-h-0 flex-1 border border-[#d4d4d4] bg-white px-1">
            <GuideGroup name="Horizontal" values={["38.845 mm", "85.107 mm"]} />
            <GuideGroup name="Vertical" values={["-99.368 mm", "-0.460 mm"]} />
          </div>
          <footer className="flex h-8 shrink-0 items-center justify-end gap-3.5 pr-1">
            <button aria-label="锁定"><Icon><path d="M5.500 9V3.500q2.500-5 5 0V9" stroke="#000" strokeWidth="1.300" /><path d="M2 9h12v7H2z" fill="#000" /><path d="M8 11v3" stroke="#fff" /></Icon></button>
            <button aria-label="删除"><Icon><path d="M1 2h14v2H1zM5 0h6v2H5zM2 5h12l-1 11H3z" fill="#333" /><path d="M6.500 7v7M9.500 7v7" stroke="#f4f4f4" /></Icon></button>
          </footer>
        </div>
        <div className="flex w-[21px] shrink-0 flex-col items-center bg-[#eaeaea] text-[13px]">
          <button className="flex h-[101px] w-full flex-col items-center bg-[#d7d7d7] pt-1">
            <svg viewBox="0 0 16 16" fill="none" stroke="#444" strokeWidth="1.200" className="h-4 w-4"><path d="M1 5l5-4l5 1l4.500 6.500l-6 5L1 9zM6 1l1 4l7.500 4.500M1 5l8 8.500M11 2L7 5" /></svg>
            <span className="mt-1.5 leading-5 [text-orientation:sideways] [writing-mode:vertical-rl]">对象样式</span>
          </button>
          <button className="flex h-[87px] w-full flex-col items-center bg-[#cce1ff] pt-1">
            <svg viewBox="0 0 16 16" fill="none" stroke="#333" strokeWidth="2" className="h-4 w-4"><path d="M0 3h16" strokeDasharray="4 2" /><path d="M3 0v16" strokeDasharray="4 2" /></svg>
            <span className="mt-1.5 leading-5 [text-orientation:sideways] [writing-mode:vertical-rl]">辅助线</span>
          </button>
          <button aria-label="添加泊坞窗" className="mt-1"><Icon><path d="M2 8h12M8 2v12" stroke="#aaa" strokeWidth="2" /></Icon></button>
        </div>
      </div>
    </section>
  );
}

/* ---------- colour palettes ---------- */

const cmyk = [
  "bg-[#231815]", "bg-[#3e3a39]", "bg-[#595757]", "bg-[#727171]", "bg-[#898989]", "bg-[#9fa0a0] outline outline-2 -outline-offset-1 outline-[#595959]", "bg-[#b5b5b6]", "bg-[#c9caca]", "bg-[#dcdddd]", "bg-[#efefef]", "bg-[#ffffff]",
  "bg-[#1d2088]", "bg-[#00a0e9]", "bg-[#009944]", "bg-[#fff100]", "bg-[#e60012]", "bg-[#e4007f]", "bg-[#ae3f80]", "bg-[#f08300]", "bg-[#f4b4b4]", "bg-[#84736a]",
  "bg-[#d0cbe4]", "bg-[#a799cb]", "bg-[#708bc6]", "bg-[#7a69ae]", "bg-[#9184ad]", "bg-[#4f648f]", "bg-[#584f6d]", "bg-[#7186a1]", "bg-[#008cd9]", "bg-[#9fd9f6]",
  "bg-[#b8ceda]", "bg-[#96a9b2]", "bg-[#6f7d86]", "bg-[#495159]", "bg-[#557472]", "bg-[#438c7b]", "bg-[#729b9a]", "bg-[#53a896]", "bg-[#55a56f]", "bg-[#5cc2d0]", "bg-[#4ea8b5]", "bg-[#b8cab9]", "bg-[#d5ead8]", "bg-[#a2d5ac]",
];

function Palette({ colors, main }: { colors: string[]; main?: boolean }) {
  return (
    <aside className={`flex shrink-0 flex-col items-center border-l border-[#d4d4d4] bg-[#f4f4f4] pt-0.5 pb-[5px] ${main ? "w-5" : "w-[21px]"}`}>
      <Dots className="h-1.5 w-4" />
      <span className="flex h-[18px] shrink-0 items-center"><svg viewBox="0 0 4 8" className="h-2 w-1"><path d="M0 0l4 4l-4 4z" fill="#666" /></svg></span>
      <button aria-label="滴管" className="flex h-[22px] shrink-0 items-center"><Dropper muted={main} /></button>
      <span className="flex h-4 shrink-0 items-center pb-0.5 text-[#ccc]"><Chevron d={UP} /></span>
      <div className="flex min-h-0 flex-1 flex-col overflow-hidden">
        <div className="w-[18px] border border-b-0 border-[#595959]">
          <NoFill className="h-[17px] w-4 border-b border-[#595959]" />
          {colors.map((c) => <button key={c} aria-label="颜色" className={`block h-[17px] w-4 border-b border-[#595959] ${c}`} />)}
        </div>
      </div>
      <span className={`flex h-3.5 shrink-0 items-center ${main ? "text-[#999]" : "text-[#ccc]"}`}><Chevron d={DOWN} /></span>
      <span className="flex h-[22px] shrink-0 items-center text-[#bbb]"><More /></span>
    </aside>
  );
}

/* ---------- status bar + overlays ---------- */

function Latin({ children }: Kids) {
  return <span className="text-xs whitespace-pre">{children}</span>;
}

function StatusBar() {
  return (
    <footer className="flex h-9 shrink-0 items-center border-t border-[#d4d4d4] bg-[#f4f4f4] pr-3 pl-[11px] text-[13px] leading-5 whitespace-nowrap text-black">
      <button aria-label="选项"><Gear /></button>
      <span className="ml-[5px] w-[877px]">
        单击对象两次可旋转/倾斜；双击工具可选择所有对象；按住<Latin> Shift </Latin>键单击可选择多个对象；按住<Latin> Alt </Latin>键单击可进行挖掘；按住<Latin> Ctrl </Latin>并单击可在组中选择
      </span>
      <span>选定<Latin> 4 </Latin>对象<Latin> </Latin>于<Latin> </Latin>主图层<Latin> </Latin>辅助线<Latin> (</Latin>所有页<Latin>)</Latin></span>
      <div className="ml-auto flex items-center">
        <Bucket />
        <svg viewBox="0 0 22 22" className="ml-0.5 h-[22px] w-[22px] shrink-0" aria-hidden="true">
          <path d="M.5.5h21v21H.5z" fill="#fff" stroke="#b3b3b3" />
          <path d="M1.500 20.500l19-19" stroke="#d8141c" strokeWidth="1.600" />
        </svg>
        <span className="ml-1 w-40">无</span>
        <Pen />
        <span className="ml-[3px] h-[22px] w-[22px] border border-[#b3b3b3] bg-[#00f]" />
        <span className="ml-1 w-[206px] text-xs whitespace-pre">R:    0 G:    0 B:    255 (#0000...</span>
        <Sep className="h-6" />
        <Icon className="ml-2.5">
          <path d="M.5.5h15v12H.5z" fill="#fff" stroke="#333" />
          <path d="M2 2h12v4H2z" fill="#f00" />
          <path d="M2 6h12v5H2z" fill="#00a0e9" />
          <circle cx="8" cy="6.500" r="2.500" fill="#7d7" stroke="#333" />
          <path d="M3 15.500h10" stroke="#333" />
        </Icon>
      </div>
    </footer>
  );
}

function Overlays() {
  return (
    <>
      <svg viewBox="0 0 400 560" className="pointer-events-none absolute top-0 left-0 z-30 h-[560px] w-[400px]" aria-hidden="true">
        <g fill="#f00" stroke="#a33" strokeWidth=".5" className="[filter:drop-shadow(3px_3px_2px_rgb(0_0_0/0.5))]">
          <path d="M71.500 151.500L122 61l-5-1L134.500 38L131.500 66l-5-3L74 152.500z" />
          <path d="M90.500 522.500l43-54l-5-2.500l21.500-15l-11 24l-2.500-5L92.500 524z" />
        </g>
        <path d="M248.500 437.500v16l3.500-3.500l3 5.500l3-1l-3-5.500h5z" fill="#fff" stroke="#223" />
      </svg>
      <div className="absolute bottom-[57px] left-[1255px] z-30 flex h-[26px] w-[61px] items-center justify-center gap-1 rounded-md border border-[#888] bg-white text-[13px] leading-5 text-[#222] shadow-[0_2px_3px_rgba(0,0,0,0.5)]">
        <span className="text-xs">CH</span>
        <svg viewBox="0 0 10 12" className="h-3 w-2.5"><path d="M5 .5q4 3 2.500 7T.5 10Q5 8 5 .5z" fill="none" stroke="#222" /></svg>
        <span>简</span>
      </div>
      <div className="pointer-events-none absolute right-[11px] bottom-1.5 z-30 flex items-center opacity-75">
        <svg viewBox="0 0 44 44" className="mr-0.5 h-11 w-11" aria-hidden="true">
          <path d="M42 3Q13 3 5 19T7 38Q4 22 17 14T42 3z" fill="#3f9be0" />
          <path d="M22 13Q37 11 40 20T24 35Q33 28 31 21T22 13z" fill="#4dba6a" />
          <path d="M9 40Q28 42 40 26Q36 42 20 43.500Q12 43 9 40z" fill="#b5d334" />
          <path d="M28 20Q21 15 15 22T17 34Q27 35 28 26Q20 21 19 28" fill="none" stroke="#4a8fd6" strokeWidth="2.500" />
        </svg>
        <div className="flex flex-col">
          <span className="text-[21px] leading-6 font-bold text-[#3a86cc]">极光下载站</span>
          <span className="font-['Liberation_Sans'] text-base leading-5 font-bold text-[#3fb262]">www.xz7.com</span>
        </div>
      </div>
    </>
  );
}

export default function App() {
  return (
    <div className="relative flex h-screen w-full flex-col overflow-hidden bg-[#f4f4f4] font-['Open_Sans','Noto_Sans_CJK_SC',sans-serif] text-xs text-black">
      <TitleBar />
      <MenuBar />
      <StandardBar />
      <PropertyBar />
      <div className="flex min-h-0 flex-1">
        <Toolbox />
        <DocWindow />
        <span className="flex w-[5px] shrink-0 bg-white pl-0.5"><span className="w-px bg-[#d4d4d4]" /></span>
        <Docker />
        <Palette colors={cmyk} main />
        <Palette colors={[]} />
      </div>
      <StatusBar />
      <Overlays />
    </div>
  );
}
